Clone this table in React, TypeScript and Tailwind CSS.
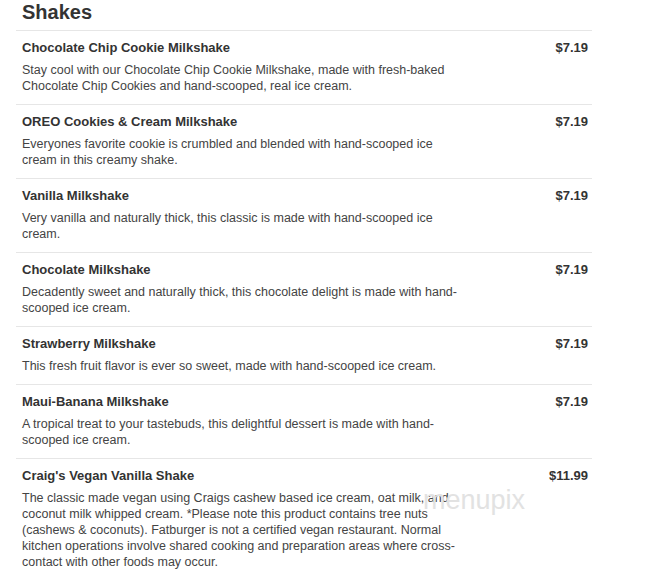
const items = [
  {
    name: "Chocolate Chip Cookie Milkshake",
    price: "$7.19",
    desc: "Stay cool with our Chocolate Chip Cookie Milkshake, made with fresh-baked Chocolate Chip Cookies and hand-scooped, real ice cream.",
  },
  {
    name: "OREO Cookies & Cream Milkshake",
    price: "$7.19",
    desc: "Everyones favorite cookie is crumbled and blended with hand-scooped ice cream in this creamy shake.",
  },
  {
    name: "Vanilla Milkshake",
    price: "$7.19",
    desc: "Very vanilla and naturally thick, this classic is made with hand-scooped ice cream.",
  },
  {
    name: "Chocolate Milkshake",
    price: "$7.19",
    desc: "Decadently sweet and naturally thick, this chocolate delight is made with hand-scooped ice cream.",
  },
  {
    name: "Strawberry Milkshake",
    price: "$7.19",
    desc: "This fresh fruit flavor is ever so sweet, made with hand-scooped ice cream.",
  },
  {
    name: "Maui-Banana Milkshake",
    price: "$7.19",
    desc: "A tropical treat to your tastebuds, this delightful dessert is made with hand-scooped ice cream.",
  },
  {
    name: "Craig's Vegan Vanilla Shake",
    price: "$11.99",
    desc: "The classic made vegan using Craigs cashew based ice cream, oat milk, and coconut milk whipped cream. *Please note this product contains tree nuts (cashews & coconuts). Fatburger is not a certified vegan restaurant. Normal kitchen operations involve shared cooking and preparation areas where cross-contact with other foods may occur.",
  },
];

export default function App() {
  return (
    <div
      className="relative min-h-[580px] w-[646px] overflow-hidden bg-white"
      style={{ fontFamily: '"Liberation Sans", Arial, sans-serif' }}
    >
      <div className="ml-4 w-[576px]">
        {/* heading */}
        <h2 className="h-[30px] pl-1.5 text-[20px] font-bold leading-[24px] text-[#333]">
          Shakes
        </h2>

        {items.map((item) => (
          <div
            key={item.name}
            className="border-t border-[#e6e6e6] pb-[10px] pl-1.5 pr-1 pt-2"
          >
            <div className="flex items-start justify-between">
              <span className="text-[13px] font-bold leading-[18px] text-[#333]">
                {item.name}
              </span>
              <span className="text-[13px] font-bold leading-[18px] text-[#333]">
                {item.price}
              </span>
            </div>
            <p className="mt-[5px] max-w-[445px] text-[12.5px] leading-4 text-[#444]">
              {item.desc}
            </p>
          </div>
        ))}
        <div className="border-t border-[#e6e6e6]" />
      </div>

      {/* watermark */}
      <span className="pointer-events-none absolute left-[423px] top-[480px] text-[27px] font-light text-[#e2e2e2]">
        menupix
      </span>
    </div>
  );
}
